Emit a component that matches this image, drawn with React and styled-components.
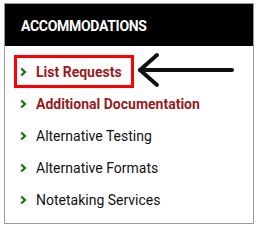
import React from "react";
import styled, { createGlobalStyle } from "styled-components";

const GlobalStyle = createGlobalStyle`
  html, body {
    margin: 0;
    padding: 0;
    background: #ffffff;
    font-family: Roboto, "Liberation Sans", Arial, sans-serif;
  }
`;

const Page = styled.div`
  position: relative;
  width: 258px;
  height: 229px;
  padding: 3px 4px 0 4px;
  box-sizing: border-box;
`;

const Panel = styled.div`
  border: 1px solid #9a9a9a;
  height: 221px;
  box-sizing: border-box;
`;

const Header = styled.div`
  background: #000000;
  height: 42px;
  display: flex;
  align-items: center;
  padding: 1px 0 0 16px;
  box-sizing: border-box;
  color: #ffffff;
  font-weight: 700;
  font-size: 14px;
  letter-spacing: -0.3px;
  text-transform: uppercase;
`;

const List = styled.ul`
  list-style: none;
  margin: 0;
  padding: 10px 0 0 0;
`;

const Item = styled.li`
  height: 32px;
  display: flex;
  align-items: center;
  gap: 9px;
  padding-left: 15px;
  font-size: 14px;
  font-weight: ${(p) => (p.$active ? 700 : 400)};
  color: ${(p) => (p.$active ? "#981b1e" : "#111111")};
`;

const Highlight = styled.div`
  position: absolute;
  left: 14px;
  top: 55px;
  width: 120px;
  height: 33px;
  border: 3px solid #ff0000;
  box-sizing: border-box;
  pointer-events: none;
`;

const ArrowSvg = styled.svg`
  position: absolute;
  left: 134px;
  top: 50px;
`;

const Chevron = () => (
  <svg width="7" height="10" viewBox="0 0 7 10">
    <polyline
      points="1.2,1.5 5,5 1.2,8.5"
      fill="none"
      stroke="#1d6b22"
      strokeWidth="2.2"
    />
  </svg>
);

const items = [
  { label: "List Requests", active: true },
  { label: "Additional Documentation", active: true },
  { label: "Alternative Testing" },
  { label: "Alternative Formats" },
  { label: "Notetaking Services" },
];

const App = () => (
  <>
    <GlobalStyle />
    <Page>
      <Panel>
        <Header>Accommodations</Header>
        <List>
          {items.map((item) => (
            <Item key={item.label} $active={item.active}>
              <Chevron />
              {item.label}
            </Item>
          ))}
        </List>
      </Panel>
      <Highlight />
      <ArrowSvg width="104" height="42" viewBox="0 0 104 42">
        <g stroke="#111111" strokeWidth="4" strokeLinecap="round" fill="none">
          <line x1="6" y1="20" x2="98" y2="20" />
          <polyline points="23,5 6,20 23,35" strokeLinejoin="round" />
        </g>
      </ArrowSvg>
    </Page>
  </>
);

export default App;
